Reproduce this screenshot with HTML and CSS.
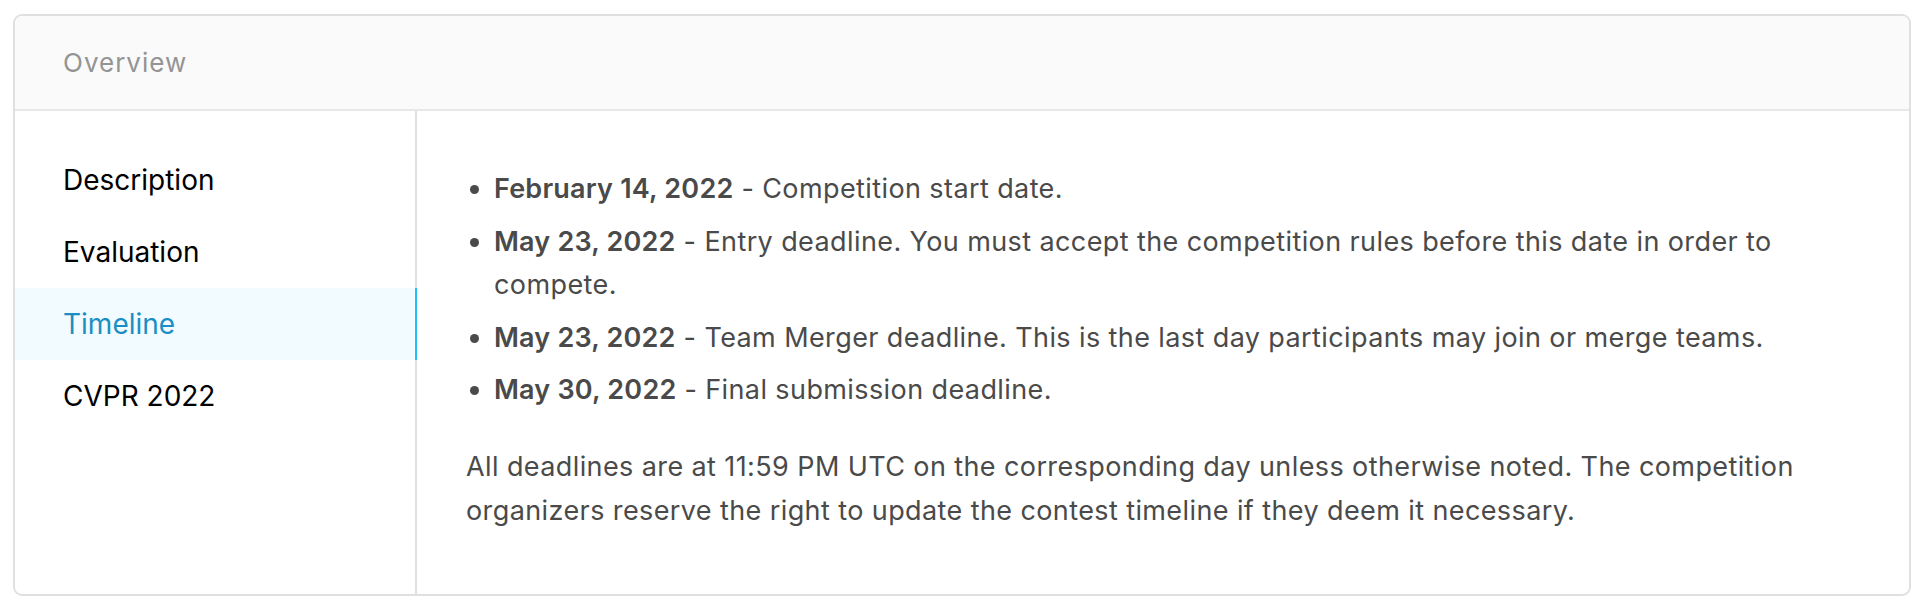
FILE: index.html
```html
<!DOCTYPE html>
<html lang="en">
<head>
<meta charset="utf-8">
<title>Overview - Timeline</title>
<link rel="stylesheet" href="styles.css">
</head>
<body>
<div class="page">
  <section class="card">
    <header class="card-header">
      <h2 class="card-title">Overview</h2>
    </header>
    <div class="card-body">
      <nav class="sidenav">
        <a class="nav-item" href="#">Description</a>
        <a class="nav-item" href="#">Evaluation</a>
        <a class="nav-item active" href="#">Timeline</a>
        <a class="nav-item" href="#">CVPR 2022</a>
      </nav>
      <div class="content">
        <ul class="timeline">
          <li><strong>February 14, 2022</strong> - Competition start date.</li>
          <li><strong>May 23, 2022</strong> - Entry deadline. You must accept the competition rules before this date in order to compete.</li>
          <li><strong>May 23, 2022</strong> - Team Merger deadline. This is the last day participants may join or merge teams.</li>
          <li><strong>May 30, 2022</strong> - Final submission deadline.</li>
        </ul>
        <p class="note">All deadlines are at 11:59 PM UTC on the corresponding day unless otherwise noted. The competition organizers reserve the right to update the contest timeline if they deem it necessary.</p>
      </div>
    </div>
  </section>
</div>
</body>
</html>
```

FILE: styles.css
```css
* {
  box-sizing: border-box;
}

html, body {
  margin: 0;
  padding: 0;
  background: #ffffff;
  font-family: Inter, "Noto Sans", "Liberation Sans", sans-serif;
}

.page {
  padding: 14px 14px 10px 13px;
}

.card {
  border: 2px solid #e0e0e0;
  border-radius: 9px;
  overflow: hidden;
  background: #ffffff;
}

.card-header {
  background: #fafafa;
  border-bottom: 2px solid #e8e8e8;
  height: 95px;
  display: flex;
  align-items: center;
  padding: 0 48px;
}

.card-title {
  margin: 0;
  font-size: 26px;
  font-weight: 400;
  letter-spacing: 1px;
  color: #949494;
  line-height: 1;
  padding-top: 1px;
}

.card-body {
  display: flex;
}

.sidenav {
  width: 402px;
  flex: none;
  border-right: 2px solid #e0e0e0;
  padding-top: 33px;
  display: flex;
  flex-direction: column;
}

.nav-item {
  display: flex;
  align-items: center;
  height: 72px;
  padding-left: 48px;
  margin-right: -2px;
  border-right: 2px solid transparent;
  font-size: 28px;
  color: #000000;
  text-decoration: none;
}

.nav-item.active {
  background: #f2fbff;
  border-right-color: #20beff;
  color: #1b8fc3;
}

.content {
  flex: 1;
  padding: 56px 49px 62px 49px;
  font-size: 27px;
  line-height: 43.5px;
  letter-spacing: 0.4px;
  color: #4a4a4a;
}

.timeline {
  margin: 0;
  padding-left: 28px;
}

.timeline li {
  margin-top: 9px;
}

.timeline li:first-child {
  margin-top: 0;
}

.timeline strong {
  font-weight: 600;
  letter-spacing: 0.2px;
}

.note {
  margin: 33.5px 0 0 0;
}
```
